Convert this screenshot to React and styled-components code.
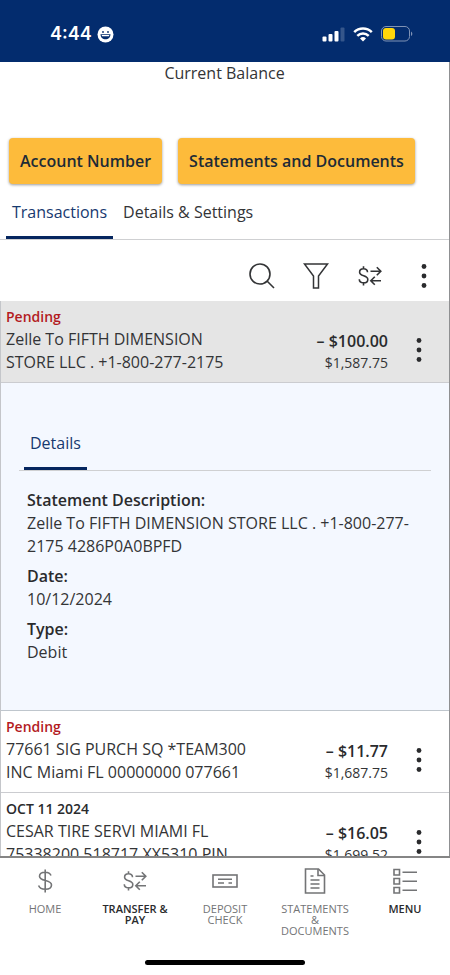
import React, { useState } from 'react';
import styled, { createGlobalStyle } from 'styled-components'

const GlobalStyle = createGlobalStyle`
* {
  box-sizing: border-box;
}
body {
  margin: 0;
  background: #ffffff;
  color: #333436;
  font-family: "Open Sans", "Noto Sans", sans-serif;
  font-size: 16px;
  line-height: 23px;
}
button {
  font: inherit;
  color: inherit;
  background: transparent;
  border: 0;
  padding: 0;
  cursor: pointer;
}
svg {
  display: block;
  flex: none;
}
`

const Page = styled.div`
display: flex;
flex-direction: column;
height: 100vh;
`

const StatusBar = styled.header`
display: flex;
justify-content: space-between;
align-items: center;
flex: none;
padding: 20px 37px 14px 50px;
background: #032c6e;
color: #ffffff;
`

const Clock = styled.div`
display: flex;
align-items: center;
gap: 5px;
font-family: Inter, sans-serif;
font-size: 18px;
font-weight: 600;
line-height: 28px;
`

const StatusIcons = styled.div`
display: flex;
align-items: center;
gap: 8px;
`

const Content = styled.main`
flex: 1;
min-height: 0;
overflow: hidden;
border-right: 1px solid #8f9092;
`

const BalanceLabel = styled.div`
text-align: center;
`

const Actions = styled.div`
display: flex;
gap: 16px;
padding: 53px 9px 0;
`

const ActionButton = styled.button`
&& {
  padding: 12px 11px 11px;
  border-radius: 4px;
  background: #fdbb3b;
  color: #1d2b36;
  font-weight: 600;
  white-space: nowrap;
  box-shadow: 0 1px 3px rgba(0, 0, 0, 0.4);
}
`

const Tabs = styled.div`
display: flex;
gap: 4px;
padding: ${(props)=>props.$inner ? "0 5px" : "15px 6px 0"};
border-bottom: 1px solid #cfd0d2;
`

const Tab = styled.button`
&& {
  padding: 2px 6px 12px;
  border-bottom: 3px solid ${(props)=>props.$active ? "#05265f" : "transparent"};
  color: ${(props)=>props.$active ? "#17396f" : "#333436"};
}
`

const Toolbar = styled.div`
display: flex;
justify-content: flex-end;
align-items: center;
gap: 28px;
padding: 23px 12px 12px 0;
`

const ToolButton = styled.button`
display: flex;
justify-content: center;
width: ${(props)=>props.$narrow ? "12px" : "26px"};
`

const List = styled.section`
border-left: 1px solid #c4c6ca;
`

const Row = styled.article`
display: flex;
justify-content: space-between;
padding: 4px 24px 8px 5px;
background: ${(props)=>props.$selected ? "#e5e5e5" : "#ffffff"};
border-bottom: 1px solid #cbccd0;
`

const RowText = styled.div`
flex: 1;
max-width: 245px;
`

const RowLabel = styled.div`
font-size: 14px;
font-weight: 600;
color: ${(props)=>props.$pending ? "#b31b1f" : "#2a2b2d"};
`

const RowSide = styled.div`
display: flex;
align-items: center;
gap: 25px;
padding-top: 21px;
`

const Amounts = styled.div`
padding-top: 3px;
text-align: right;
`

const Amount = styled.div`
font-weight: 600;
color: #2a2b2d;
`

const Balance = styled.div`
font-size: 14px;
line-height: 20px;
`

const Details = styled.div`
padding: 47px 18px 39px;
background: #f4f8ff;
border-bottom: 1px solid #bfc6cd;
`

const DetailList = styled.dl`
margin: 0;
padding: 18px 4px 0 8px;
`

const Term = styled.dt`
font-weight: 600;
color: #2a2b2d;
`

const Value = styled.dd`
margin: 0 0 7px;
`

const BottomNav = styled.nav`
display: grid;
grid-template-columns: repeat(5, 1fr);
flex: none;
padding: 10px 0 0;
border-top: 2px solid #858585;
background: #ffffff;
`

const NavItem = styled.button`
&& {
  display: flex;
  flex-direction: column;
  align-items: center;
  gap: 9px;
  color: ${(props)=>props.$dark ? "#2a2b2d" : "#737476"};
  font-size: 11px;
  font-weight: ${(props)=>props.$dark ? 600 : 500};
  line-height: 11px;
}
svg {
  color: #737476;
}
`

const NavLabel = styled.span`
max-width: 74px;
`

const HomeBar = styled.div`
flex: none;
width: 160px;
height: 5px;
margin: 24px auto 10px;
border-radius: 3px;
background: #000000;
`

const SmileIcon = () => (
    <svg width="17" height="17" viewBox="0 0 17 17">
        <circle cx="8.5" cy="8.5" r="8" fill="#fff" />
        <circle cx="6" cy="6" r="0.9" fill="#032c6e" />
        <circle cx="11" cy="6" r="0.9" fill="#032c6e" />
        <path d="M3.5 8.2h10c0 3-2.2 5-5 5s-5-2-5-5z" fill="#032c6e" />
        <path d="M4.6 9h7.800l-.5 1.300H5.100z" fill="#fff" />
    </svg>
)

const SignalIcon = () => (
    <svg width="23" height="15" viewBox="0 0 23 15" fill="#fff">
        <rect x="0.5" y="9.5" width="4" height="5" rx="1" />
        <rect x="6.5" y="7" width="4" height="7.5" rx="1" />
        <rect x="12.5" y="4" width="4" height="10.5" rx="1" />
        <rect x="18.5" y="0.5" width="4" height="14" rx="1" opacity="0.2" />
    </svg>
)

const WifiIcon = () => (
    <svg width="20" height="15" viewBox="0 0 20 15" fill="none" stroke="#fff" strokeWidth="2.5">
        <path d="M1.2 5.2a12.5 12.5 0 0 1 17.6 0" />
        <path d="M4.3 8.8a8.1 8.1 0 0 1 11.4 0" />
        <path d="M10 14.5l-3-3.1a4.3 4.3 0 0 1 6 0z" fill="#fff" stroke="none" />
    </svg>
)

const BatteryIcon = () => (
    <svg width="32" height="16" viewBox="0 0 32 16">
        <rect x="0.5" y="0.5" width="28" height="14.5" rx="4.5" fill="none" stroke="#8093b5" />
        <rect x="2" y="2" width="12" height="11.5" rx="3" fill="#ffd60a" />
        <path d="M30 5.5c1.8.8 1.8 3.8 0 4.6z" fill="#8093b5" />
    </svg>
)

const SearchIcon = () => (
    <svg width="26" height="26" viewBox="0 0 26 26" fill="none" stroke="currentColor" strokeWidth="1.6">
        <circle cx="11" cy="11" r="10" />
        <path d="M18 18l7 7" />
    </svg>
)

const FilterIcon = () => (
    <svg width="26" height="26" viewBox="0 0 26 26" fill="none" stroke="currentColor" strokeWidth="1.5">
        <path d="M1.5 1h23l-9 12v12h-5V13z" />
    </svg>
)

const TransferIcon = () => (
    <svg width="24" height="20" viewBox="0 0 24 20" fill="none" stroke="currentColor" strokeWidth="1.6">
        <path d="M9.5 6.2C9.5 4 7.8 2.8 5.5 2.8S1.6 4.2 1.6 6.2c0 4.4 8.2 2.8 8.2 7.2 0 2.2-1.8 3.4-4.2 3.4s-4.3-1.3-4.3-3.6M5.5 0.3v2.5M5.5 16.8v2.7" />
        <path d="M12.5 5.2h10M18.8 1.2l4 4-4 4M23 14.7H13M16.8 10.7l-4 4 4 4" />
    </svg>
)

const DotsIcon = () => (
    <svg width="6" height="26" viewBox="0 0 6 26" fill="#2a2b2d">
        <circle cx="3" cy="3.5" r="2.4" />
        <circle cx="3" cy="13" r="2.4" />
        <circle cx="3" cy="22.5" r="2.4" />
    </svg>
)

const DollarIcon = () => (
    <svg width="26" height="26" viewBox="0 0 26 26" fill="none" stroke="currentColor" strokeWidth="1.6">
        <path d="M19 7.5C18.2 5.3 16.2 4.2 13.3 4.2c-3.3 0-5.8 1.5-5.8 4 0 5.6 12 3 12 8.7 0 2.7-2.5 4.300-6.300 4.300-3.300 0-5.700-1.200-6.600-3.700M13.200 1.500v23" />
    </svg>
)

const CheckIcon = () => (
    <svg width="26" height="26" viewBox="0 0 26 26" fill="none" stroke="currentColor" strokeWidth="1.6">
        <rect x="1" y="7" width="24" height="12" />
        <path d="M6 11.300h14M6 15h6M16.500 15h3.500" />
    </svg>
)

const DocumentIcon = () => (
    <svg width="26" height="26" viewBox="0 0 26 26" fill="none" stroke="currentColor" strokeWidth="1.6">
        <path d="M3.500 1h13l6 6v18h-19z" />
        <path d="M16 1v6.500h6.500" />
        <path d="M8.500 8h3M8.500 12h9M8.500 16h9M8.500 20h9" />
    </svg>
)

const MenuIcon = () => (
    <svg width="26" height="26" viewBox="0 0 26 26" fill="none" stroke="currentColor" strokeWidth="1.6">
        <path d="M2 1.500h5.500V7H2zM2 10.500h5.500V16H2zM2 19.500h5.500V25H2z" />
        <path d="M10.500 4.300H25M10.500 13.300H25M10.500 22.300H25" />
    </svg>
)

const navItems = [
    { label: "HOME", icon: <DollarIcon /> },
    { label: "TRANSFER & PAY", icon: <svg width="24" height="26" viewBox="0 -3 24 26"><TransferIcon /></svg>, dark: true },
    { label: "DEPOSIT CHECK", icon: <CheckIcon /> },
    { label: "STATEMENTS & DOCUMENTS", icon: <DocumentIcon /> },
    { label: "MENU", icon: <MenuIcon />, dark: true }
]

const transactions = [
    {
        id: 1,
        label: "Pending",
        pending: true,
        description: "Zelle To FIFTH DIMENSION STORE LLC . +1-800-277-2175",
        amount: "– $100.00",
        balance: "$1,587.75",
        details: [
            ["Statement Description:", "Zelle To FIFTH DIMENSION STORE LLC . +1-800-277-2175 4286P0A0BPFD"],
            ["Date:", "10/12/2024"],
            ["Type:", "Debit"]
        ]
    },
    {
        id: 2,
        label: "Pending",
        pending: true,
        description: "77661 SIG PURCH SQ *TEAM300 INC Miami FL 00000000 077661",
        amount: "– $11.77",
        balance: "$1,687.75"
    },
    {
        id: 3,
        label: "OCT 11 2024",
        description: "CESAR TIRE SERVI MIAMI FL 75338200 518717 XX5310 PIN",
        amount: "– $16.05",
        balance: "$1,699.52"
    }
]

const Transaction = ({item, selected}) => {
    return (
        <>
        <Row $selected={selected}>
            <RowText>
                <RowLabel $pending={item.pending}>{item.label}</RowLabel>
                {item.description}
            </RowText>
            <RowSide>
                <Amounts>
                    <Amount>{item.amount}</Amount>
                    <Balance>{item.balance}</Balance>
                </Amounts>
                <ToolButton $narrow aria-label="Transaction options"><DotsIcon /></ToolButton>
            </RowSide>
        </Row>
        {
            selected && item.details ? (
                <Details>
                    <Tabs $inner>
                        <Tab $active>Details</Tab>
                    </Tabs>
                    <DetailList>
                        {item.details.map(([term, value])=>(
                            <React.Fragment key={term}>
                                <Term>{term}</Term>
                                <Value>{value}</Value>
                            </React.Fragment>
                        ))}
                    </DetailList>
                </Details>
            ) : ""
        }
        </>
    )
}

const App = () => {
    const [tab, setTab] = useState("Transactions");
  return (
    <Page>
      <GlobalStyle />
      <StatusBar>
        <Clock>4:44 <SmileIcon /></Clock>
        <StatusIcons>
          <SignalIcon />
          <WifiIcon />
          <BatteryIcon />
        </StatusIcons>
      </StatusBar>
      <Content>
        <BalanceLabel>Current Balance</BalanceLabel>
        <Actions>
          <ActionButton>Account Number</ActionButton>
          <ActionButton>Statements and Documents</ActionButton>
        </Actions>
        <Tabs>
          {["Transactions", "Details & Settings"].map((name)=>(
            <Tab key={name} $active={tab===name} onClick={()=>setTab(name)}>{name}</Tab>
          ))}
        </Tabs>
        <Toolbar>
          <ToolButton aria-label="Search"><SearchIcon /></ToolButton>
          <ToolButton aria-label="Filter"><FilterIcon /></ToolButton>
          <ToolButton aria-label="Transfer"><TransferIcon /></ToolButton>
          <ToolButton aria-label="More"><DotsIcon /></ToolButton>
        </Toolbar>
        <List>
          {transactions.map((item)=>(
            <Transaction key={item.id} item={item} selected={item.id===1} />
          ))}
        </List>
      </Content>
      <BottomNav>
        {navItems.map((item)=>(
          <NavItem key={item.label} $dark={item.dark}>
            {item.icon}
            <NavLabel>{item.label}</NavLabel>
          </NavItem>
        ))}
      </BottomNav>
      <HomeBar />
    </Page>
  )
}

export default App
